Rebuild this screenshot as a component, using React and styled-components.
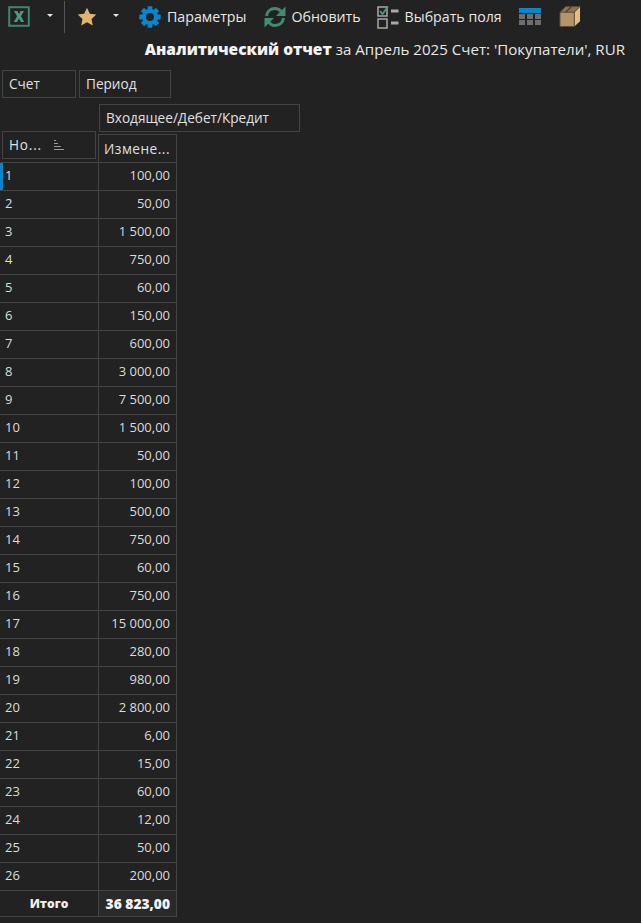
import React from "react";
import styled, { createGlobalStyle } from "styled-components";

const Global = createGlobalStyle`
  html, body { margin: 0; padding: 0; background: #222222; }
  body { font-family: "Open Sans", "Noto Sans", sans-serif; color: #e6e6e6; }
`;
const Page = styled.div`
  width: 641px; height: 923px; overflow: hidden; background: #222222;
  display: flex; flex-direction: column;
`;
const Toolbar = styled.div`
  height: 33px; display: flex; align-items: center; padding-left: 8px;
`;
const IconSlot = styled.span`
  display: flex; align-items: center; justify-content: center; width: ${p => p.$w || 22}px; height: 22px;
  margin-left: ${p => p.$ml || 0}px;
`;
const Caret = styled.span`
  width: 0; height: 0; border-left: 3px solid transparent; border-right: 3px solid transparent;
  border-top: 3px solid #e8e8e8; margin-left: ${p => p.$ml}px; margin-top: -2px;
`;
const Divider = styled.span`
  width: 1px; height: 32px; background: #555; margin-left: ${p => p.$ml}px;
`;
const ToolLabel = styled.span`
  font-size: 14.2px; line-height: 22px; color: #e8e8e8; margin-left: ${p => p.$ml || 3}px; white-space: nowrap;
`;
const TitleLine = styled.div`
  height: 37px; box-sizing: border-box; padding: 5px 16px 0 0; text-align: right; font-size: 15.1px; line-height: 22px;
  color: #e8e8e8; white-space: nowrap;
`;
const TitleBold = styled.b`
  font-size: 15.5px; font-weight: 800; color: #f4f4f4;
`;
const Chips = styled.div`
  display: flex; gap: 3px; padding-left: 2px; height: 28px;
`;
const Chip = styled.div`
  box-sizing: border-box; width: ${p => p.$w}px; height: 28px; border: 1px solid #444; padding: 0 6px;
  font-size: 13.6px; line-height: 26px; color: #e0e0e0; white-space: nowrap;
`;
const ColumnArea = styled.div`
  padding-left: 99px; margin-top: 6px; height: 27px;
`;
const HeaderRow = styled.div`
  display: flex; height: 31px; padding-left: 2px;
`;
const SortChip = styled(Chip)`
  display: flex; align-items: center; justify-content: space-between; padding-right: 31px; letter-spacing: 0.8px;
`;
const ValueHead = styled.div`
  box-sizing: border-box; width: 79px; height: 28px; margin: 3px 0 0 2px; border: 1px solid #444;
  border-bottom: none; padding: 0 5px; font-size: 13.6px; line-height: 28px; color: #e0e0e0; white-space: nowrap;
  letter-spacing: 0.5px;
`;
const Table = styled.div`
  display: grid; grid-template-columns: 98px 79px; width: 177px; grid-auto-rows: 28px;
`;
const Cell = styled.div`
  box-sizing: border-box; border-top: 1px solid #444; font-size: 13px; line-height: 25px; color: #dcdcdc; white-space: nowrap;
  position: relative;
`;
const NameCell = styled(Cell)`
  padding-left: 5px;
  ${p => p.$active && `&::before { content: ""; position: absolute; left: 0; top: 0; bottom: 0; width: 3px; background: #0a84c8; }`}
`;
const ValueCell = styled(Cell)`
  border-left: 1px solid #444; border-right: 1px solid #444; text-align: right; padding-right: 6px;
`;
const TotalLabel = styled(Cell)`
  border-bottom: 1px solid #444; font-size: 12px; font-weight: 800; color: #f0f0f0; text-align: center; height: 27px;
`;
const TotalValue = styled(ValueCell)`
  border-bottom: 1px solid #444; background: #2a2a2a; font-size: 13.8px; font-weight: 800; color: #f4f4f4; height: 27px;
`;

const Excel = () => (
  <svg width="22" height="22" viewBox="0 0 22 22">
    <rect x="1.200" y="1.200" width="19.600" height="18.600" fill="none" stroke="#3f8571" strokeWidth="2" />
    <path d="M6 5h3.400l1.600 3 1.600-3H16l-3.100 5.200L16.200 16h-3.300L11 12.500 9.100 16H5.800l3.300-5.800z" fill="#4a9a83" />
  </svg>
);
const Star = () => (
  <svg width="20" height="20" viewBox="0 0 20 20">
    <path d="M10 .8l2.800 6 6.500.8-4.800 4.400 1.300 6.500-5.800-3.300-5.800 3.300 1.300-6.500L.7 7.600l6.500-.8z" fill="#e0b46f" />
  </svg>
);
const Gear = () => (
  <svg width="22" height="22" viewBox="0 0 22 22">
    <g fill="#0a86cc">
      {[0, 45, 90, 135, 180, 225, 270, 315].map(a => (
        <rect key={a} x="8.600" y="0.300" width="4.800" height="5" rx="0.600" transform={`rotate(${a} 11 11)`} />
      ))}
    </g>
    <circle cx="11" cy="11" r="6" fill="none" stroke="#0a86cc" strokeWidth="4" />
  </svg>
);
const Refresh = () => (
  <svg width="22" height="22" viewBox="0 0 22 22">
    <g fill="none" stroke="#418b73" strokeWidth="3">
      <path d="M2.500 10C3 5.500 6.500 2.500 11 2.500c2.600 0 4.600 1 6 3" />
      <path d="M19.500 12c-.5 4.500-4 7.500-8.500 7.500-2.600 0-4.600-1-6-3" />
    </g>
    <path d="M21.500 .5v9.500H12z" fill="#418b73" />
    <path d="M.5 21.500V12H10z" fill="#418b73" />
  </svg>
);
const Fields = () => (
  <svg width="22" height="24" viewBox="0 0 22 24">
    <g fill="none" stroke="#a9a9a9" strokeWidth="1.500">
      <rect x="1" y="2" width="9" height="9" />
      <rect x="1" y="14" width="9" height="9" />
    </g>
    <path d="M3 6l2.500 3L11 1.500" fill="none" stroke="#4a9a83" strokeWidth="1.800" />
    <rect x="14" y="4.500" width="7.500" height="3" fill="#a9a9a9" />
    <rect x="14" y="16.500" width="7.500" height="3" fill="#a9a9a9" />
  </svg>
);
const Grid = () => (
  <svg width="22" height="18" viewBox="0 0 22 18">
    <rect x="0" y="0" width="22" height="5" fill="#0a86cc" />
    {[6, 12].map(y => [0, 8, 16].map(x => <rect key={`${x}${y}`} x={x} y={y} width="6" height="5" fill="#6d6d6d" />))}
  </svg>
);
const Box = () => (
  <svg width="23" height="23" viewBox="0 0 23 23">
    <path d="M1 7L7 1h15l-6 6z" fill="#8b7350" />
    <path d="M16 7l6-6v15.500L16 22z" fill="#e3bd80" />
    <rect x="1" y="7" width="15" height="15" fill="#b39568" />
    <path d="M7 7l6-6" stroke="#4d4030" strokeWidth="1.500" />
    <path d="M1 7h15v15H1zM16 7l6-6" fill="none" stroke="#5a4a35" strokeWidth="1" />
  </svg>
);
const SortIcon = () => (
  <svg width="10" height="10" viewBox="0 0 10 10">
    <g stroke="#9a9a9a" strokeWidth="1">
      <path d="M0 .5h2M0 3.500h4M0 6.500h7M0 9.500h10" />
    </g>
  </svg>
);

const values = ["100,00","50,00","1 500,00","750,00","60,00","150,00","600,00","3 000,00","7 500,00","1 500,00","50,00","100,00","500,00","750,00","60,00","750,00","15 000,00","280,00","980,00","2 800,00","6,00","15,00","60,00","12,00","50,00","200,00"];

export default function App() {
  return (
    <Page>
      <Global />
      <Toolbar>
        <Excel />
        <Caret $ml={17} />
        <Divider $ml={11} />
        <IconSlot $ml={11}><Star /></IconSlot>
        <Caret $ml={15} />
        <IconSlot $ml={20}><Gear /></IconSlot>
        <ToolLabel $ml={6}>Параметры</ToolLabel>
        <IconSlot $ml={18}><Refresh /></IconSlot>
        <ToolLabel $ml={5}>Обновить</ToolLabel>
        <IconSlot $ml={16}><Fields /></IconSlot>
        <ToolLabel $ml={6}>Выбрать поля</ToolLabel>
        <IconSlot $ml={17}><Grid /></IconSlot>
        <IconSlot $ml={18}><Box /></IconSlot>
      </Toolbar>
      <TitleLine><TitleBold>Аналитический отчет</TitleBold> за Апрель 2025 Счет: 'Покупатели', RUR</TitleLine>
      <Chips>
        <Chip $w={74}>Счет</Chip>
        <Chip $w={92}>Период</Chip>
      </Chips>
      <ColumnArea><Chip $w={201}>Входящее/Дебет/Кредит</Chip></ColumnArea>
      <HeaderRow>
        <SortChip $w={94}>Но... <SortIcon /></SortChip>
        <ValueHead>Измене...</ValueHead>
      </HeaderRow>
      <Table>
        {values.map((v, i) => (
          <React.Fragment key={i}>
            <NameCell $active={i === 0}>{i + 1}</NameCell>
            <ValueCell>{v}</ValueCell>
          </React.Fragment>
        ))}
        <TotalLabel>Итого</TotalLabel>
        <TotalValue>36 823,00</TotalValue>
      </Table>
    </Page>
  );
}
